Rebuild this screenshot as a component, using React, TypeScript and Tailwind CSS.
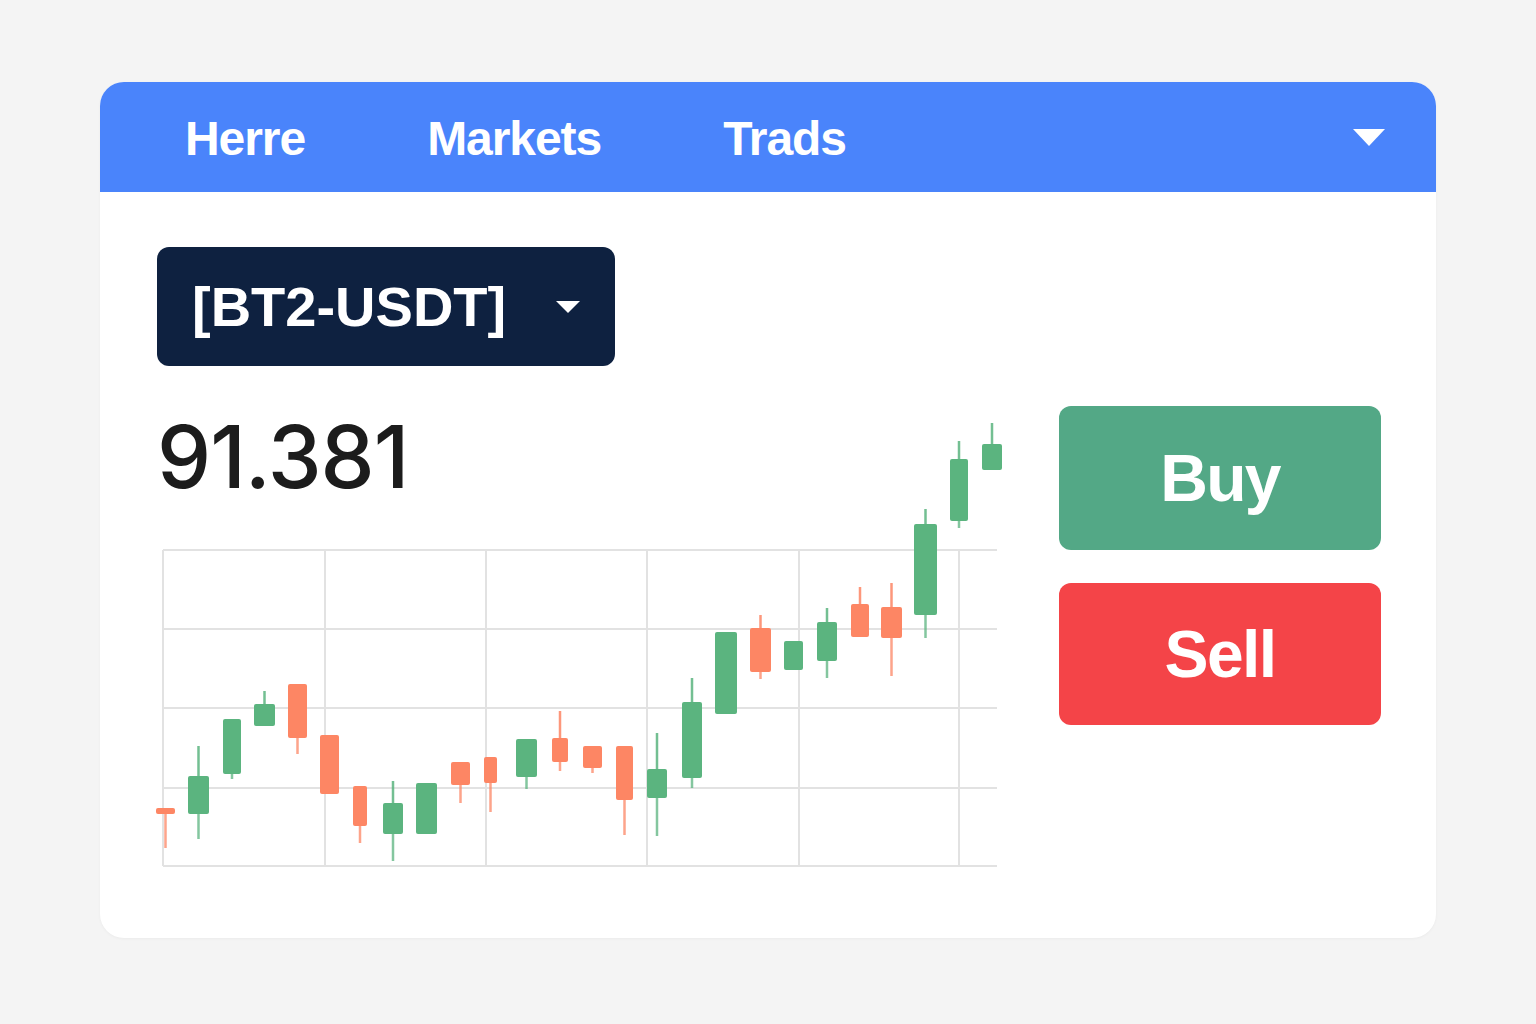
import React from 'react';

type Candle = { x1: number; x2: number; top: number; bottom: number; hi?: number; lo?: number; up: boolean };

// page-space coordinates, chart box spans x 163-997, y 549-865
const candles: Candle[] = [
  { x1: 156, x2: 175, top: 807, bottom: 813, lo: 847, up: false },
  { x1: 188, x2: 209, top: 775, bottom: 813, hi: 745, lo: 838, up: true },
  { x1: 223, x2: 241, top: 718, bottom: 773, lo: 778, up: true },
  { x1: 254, x2: 275, top: 703, bottom: 725, hi: 690, up: true },
  { x1: 288, x2: 307, top: 683, bottom: 737, lo: 753, up: false },
  { x1: 320, x2: 339, top: 734, bottom: 793, up: false },
  { x1: 353, x2: 367, top: 785, bottom: 825, lo: 842, up: false },
  { x1: 383, x2: 403, top: 802, bottom: 833, hi: 780, lo: 860, up: true },
  { x1: 416, x2: 437, top: 782, bottom: 833, up: true },
  { x1: 451, x2: 470, top: 761, bottom: 784, lo: 802, up: false },
  { x1: 484, x2: 497, top: 756, bottom: 782, lo: 811, up: false },
  { x1: 516, x2: 537, top: 738, bottom: 776, lo: 788, up: true },
  { x1: 552, x2: 568, top: 737, bottom: 761, hi: 710, lo: 770, up: false },
  { x1: 583, x2: 602, top: 745, bottom: 767, lo: 772, up: false },
  { x1: 616, x2: 633, top: 745, bottom: 799, lo: 834, up: false },
  { x1: 647, x2: 667, top: 768, bottom: 797, hi: 732, lo: 835, up: true },
  { x1: 682, x2: 702, top: 701, bottom: 777, hi: 677, lo: 787, up: true },
  { x1: 715, x2: 737, top: 631, bottom: 713, up: true },
  { x1: 750, x2: 771, top: 627, bottom: 671, hi: 614, lo: 678, up: false },
  { x1: 784, x2: 803, top: 640, bottom: 669, up: true },
  { x1: 817, x2: 837, top: 621, bottom: 660, hi: 607, lo: 677, up: true },
  { x1: 851, x2: 869, top: 603, bottom: 636, hi: 586, up: false },
  { x1: 881, x2: 902, top: 606, bottom: 637, hi: 582, lo: 675, up: false },
  { x1: 914, x2: 937, top: 523, bottom: 614, hi: 508, lo: 637, up: true },
  { x1: 950, x2: 968, top: 458, bottom: 520, hi: 440, lo: 527, up: true },
  { x1: 982, x2: 1002, top: 443, bottom: 469, hi: 422, up: true },
];

const vLines = [163, 325, 486, 647, 799, 959];
const hLines = [549, 628, 707, 787, 865];

function CandleChart() {
  return (
    <svg width="834" height="318" viewBox="163 548 834 318" className="block overflow-visible">
      {vLines.map((x) => (
        <line key={'v' + x} x1={x} y1={549} x2={x} y2={865} stroke="#e2e2e2" strokeWidth="2" />
      ))}
      {hLines.map((y) => (
        <line key={'h' + y} x1={163} y1={y} x2={997} y2={y} stroke="#e2e2e2" strokeWidth="2" />
      ))}
      {candles.map((c, i) => {
        const fill = c.up ? '#5bb47f' : '#fd8664';
        const mid = (c.x1 + c.x2) / 2;
        return (
          <g key={i}>
            {c.hi !== undefined && (
              <line x1={mid} y1={c.hi} x2={mid} y2={c.top} stroke={fill} strokeWidth="2.5" opacity="0.85" />
            )}
            {c.lo !== undefined && (
              <line x1={mid} y1={c.bottom} x2={mid} y2={c.lo} stroke={fill} strokeWidth="2.5" opacity="0.75" />
            )}
            <rect x={c.x1} y={c.top} width={c.x2 - c.x1} height={c.bottom - c.top} rx="2" fill={fill} />
          </g>
        );
      })}
    </svg>
  );
}

export default function App() {
  return (
    <main className="min-h-screen w-full bg-[#f4f4f4] pt-[82px] pl-[100px] font-['Liberation_Sans',Arial,sans-serif]">
      <div className="w-[1336px] h-[856px] rounded-[24px] bg-white overflow-hidden shadow-[0_1px_3px_rgba(0,0,0,0.04)]">
        {/* Top nav */}
        <header className="flex h-[110px] items-center bg-[#4a84fb] pt-[4px] pl-[85px] pr-[51px] text-white">
          <nav className="flex items-center gap-[122px] text-[48px] font-bold tracking-[-0.022em]">
            <span>Herre</span>
            <span>Markets</span>
            <span>Trads</span>
          </nav>
          <svg className="ml-auto -mt-[4px]" width="32" height="17" viewBox="0 0 32 17">
            <path d="M0 0 H32 L16 17 Z" fill="#fff" />
          </svg>
        </header>

        <div className="flex pt-[55px] pl-[57px] pr-[55px]">
          {/* Left: pair, price, chart */}
          <div className="w-[848px]">
            <button className="flex h-[119px] w-[458px] items-center justify-between rounded-[12px] bg-[#0e2140] px-[35px] text-white">
              <span className="text-[56px] font-bold leading-none">[BT2-USDT]</span>
              <svg width="24" height="12" viewBox="0 0 24 12">
                <path d="M0 0 H24 L12 12 Z" fill="#fff" />
              </svg>
            </button>

            <div className="mt-[48px] h-[86px] font-['Inter',sans-serif] text-[86px] font-medium leading-none tracking-[-0.012em] text-[#1c1c1c]">
              91.381
            </div>

            <div className="mt-[49px] ml-[6px]">
              <CandleChart />
            </div>
          </div>

          {/* Right: actions */}
          <div className="ml-auto mt-[159px] flex w-[322px] flex-col gap-[33px]">
            <button className="flex h-[144px] items-center justify-center rounded-[12px] bg-[#53a886] text-[66px] font-bold tracking-tight text-white">
              Buy
            </button>
            <button className="flex h-[142px] items-center justify-center rounded-[12px] bg-[#f44448] text-[66px] font-bold tracking-tight text-white">
              Sell
            </button>
          </div>
        </div>
      </div>
    </main>
  );
}
